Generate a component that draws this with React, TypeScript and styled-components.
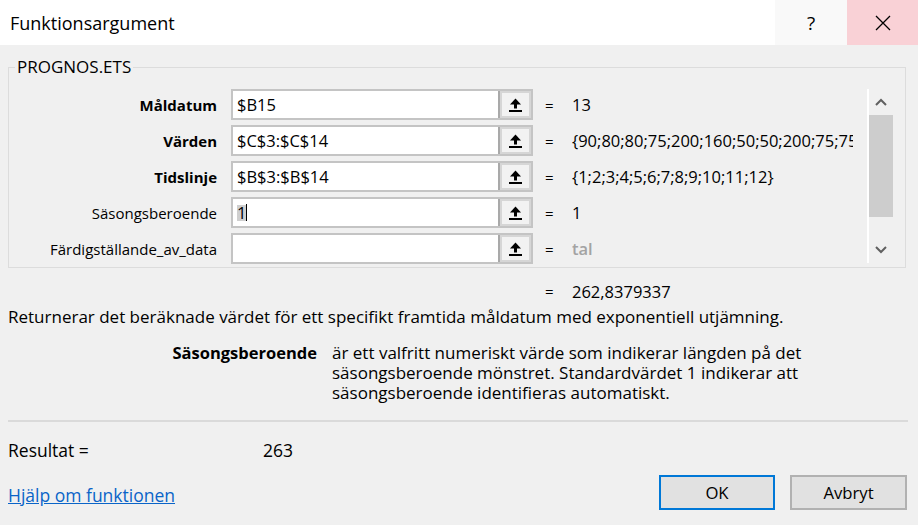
import React from "react";
import styled, { createGlobalStyle } from "styled-components";

const GlobalStyle = createGlobalStyle`
  html, body {
    margin: 0;
    padding: 0;
  }
  body {
    background: #f0f0f0;
    font-family: "Open Sans", "Noto Sans", sans-serif;
    font-size: 15px;
    color: #000;
  }
`;

const Dialog = styled.div`
  width: 918px;
  height: 525px;
  display: flex;
  flex-direction: column;
  background: #f0f0f0;
  overflow: hidden;
`;

const TitleBar = styled.header`
  height: 45px;
  flex: none;
  display: flex;
  align-items: stretch;
  background: #fff;
`;

const Title = styled.div`
  flex: 1;
  display: flex;
  align-items: center;
  padding-left: 10px;
  font-size: 18px;
`;

const CaptionButton = styled.div<{ $variant: "help" | "close" }>`
  width: ${(p) => (p.$variant === "close" ? 71 : 72)}px;
  display: flex;
  align-items: center;
  justify-content: center;
  background: ${(p) => (p.$variant === "close" ? "#f9d1d6" : "#f9f9f9")};
  font-size: 19px;
`;

const Group = styled.fieldset`
  margin: 14px 0 0 8px;
  width: 898px;
  box-sizing: border-box;
  border: 1px solid #dcdcdc;
  padding: 14px 0 3px 0;
  min-width: 0;
`;

const Legend = styled.legend`
  margin-left: 6px;
  padding: 0 2px;
  line-height: 16px;
  font-size: 17px;
`;

const GroupBody = styled.div`
  display: flex;
  align-items: flex-start;
`;

const ArgList = styled.div`
  display: flex;
  flex-direction: column;
  gap: 5px;
`;

const Columns = styled.div`
  display: grid;
  grid-template-columns: 222px 302px 39px 281px;
  align-items: center;
`;

const ArgRow = styled(Columns)`
  height: 31px;
`;

const ArgLabel = styled.label<{ $required?: boolean }>`
  text-align: right;
  padding-right: 14px;
  font-weight: ${(p) => (p.$required ? 700 : 400)};
  white-space: nowrap;
`;

const InputBox = styled.div`
  display: flex;
  height: 31px;
  box-sizing: border-box;
  border: 2px solid #c4c4c4;
  background: #fff;
`;

const Field = styled.div`
  flex: 1;
  display: flex;
  align-items: center;
  padding-left: 4px;
  white-space: nowrap;
  overflow: hidden;
  font-size: 16.5px;
`;

const Selection = styled.span`
  background: #cfcfcf;
  line-height: 16px;
`;

const Caret = styled.span`
  width: 1px;
  height: 17px;
  background: #000;
`;

const RefButton = styled.div`
  width: 33px;
  box-sizing: border-box;
  display: flex;
  align-items: center;
  justify-content: center;
  background: #f2f2f2;
  border-left: 2px solid #a9a9a9;
  box-shadow: inset 0 0 0 2px #d6d6d6;
`;

const Equals = styled.span<{ $col?: number }>`
  padding-left: 12px;
  grid-column: ${(p) => p.$col ?? "auto"};
`;

const Value = styled.span<{ $hint?: boolean }>`
  overflow: hidden;
  white-space: nowrap;
  font-size: 16.5px;
  line-height: 23px;
  color: ${(p) => (p.$hint ? "#a3a3a3" : "#000")};
  font-weight: ${(p) => (p.$hint ? 600 : 400)};
`;

const Scrollbar = styled.div`
  margin-left: 14px;
  width: 26px;
  height: 174px;
  box-sizing: border-box;
  border-left: 2px solid #fff;
  display: flex;
  flex-direction: column;
  align-items: stretch;
`;

const ScrollArrow = styled.div`
  height: 26px;
  display: flex;
  align-items: center;
  justify-content: center;
`;

const ScrollTrack = styled.div`
  flex: 1;
  display: flex;
  flex-direction: column;
`;

const Thumb = styled.div`
  height: 102px;
  background: #cdcdcd;
`;

const ResultRow = styled(Columns)`
  margin: 12px 0 0 9px;
  height: 22px;
`;

const Description = styled.p`
  margin: 5px 0 0 8px;
  line-height: 20px;
  font-size: 17px;
`;

const ArgHelp = styled.div`
  margin-top: 16px;
  display: grid;
  grid-template-columns: 317px 1fr;
  column-gap: 15px;
  line-height: 20px;
`;

const ArgHelpName = styled.span`
  text-align: right;
  font-weight: 700;
  font-size: 16.5px;
`;

const ArgHelpText = styled.span`
  display: flex;
  flex-direction: column;
  font-size: 17px;
`;

const Separator = styled.hr`
  margin: 17px 10px 0 8px;
  height: 2px;
  border: none;
  background: #dadada;
`;

const Outcome = styled.div`
  margin: 18px 0 0 8px;
  display: grid;
  grid-template-columns: 255px auto;
  line-height: 20px;
  font-size: 17.5px;
`;

const Footer = styled.div`
  margin-top: 15px;
  display: flex;
  align-items: center;
  padding: 0 11px 0 8px;
`;

const HelpLink = styled.a`
  flex: 1;
  margin-top: 5px;
  font-size: 17.5px;
  color: #0a64c8;
  text-decoration: underline;
  cursor: pointer;
`;

const ActionButton = styled.button<{ $default?: boolean }>`
  width: ${(p) => (p.$default ? 116 : 117)}px;
  height: 35px;
  margin-left: ${(p) => (p.$default ? 0 : 15)}px;
  box-sizing: border-box;
  border: 2px solid ${(p) => (p.$default ? "#0078d7" : "#b1b1b1")};
  background: #e1e1e1;
  font-family: inherit;
  font-size: 16.7px;
  color: #000;
  padding: 0;
`;

const UploadIcon = () => (
  <svg width="13" height="14" viewBox="0 0 13 14" aria-hidden="true">
    <polygon points="6.5,0.5 12,6.5 1,6.5" fill="#000" />
    <rect x="5" y="5.5" width="3" height="5" fill="#000" />
    <rect x="0" y="12" width="13" height="2" fill="#000" />
  </svg>
);

const Chevron = ({ up }: { up?: boolean }) => (
  <svg width="12" height="8" viewBox="0 0 12 8" aria-hidden="true">
    <polyline
      points={up ? "1,7 6,2 11,7" : "1,1 6,6 11,1"}
      fill="none"
      stroke="#606060"
      strokeWidth="2"
    />
  </svg>
);

const CloseGlyph = () => (
  <svg width="16" height="16" viewBox="0 0 16 16" aria-hidden="true">
    <path d="M1 1 L15 15 M15 1 L1 15" stroke="#000" strokeWidth="1.3" />
  </svg>
);

type Arg = {
  name: string;
  required: boolean;
  input: React.ReactNode;
  value: string;
  hint?: boolean;
};

const args: Arg[] = [
  { name: "Måldatum", required: true, input: "$B15", value: "13" },
  { name: "Värden", required: true, input: "$C$3:$C$14", value: "{90;80;80;75;200;160;50;50;200;75;75;50}" },
  { name: "Tidslinje", required: true, input: "$B$3:$B$14", value: "{1;2;3;4;5;6;7;8;9;10;11;12}" },
  {
    name: "Säsongsberoende",
    required: false,
    input: (
      <>
        <Selection>1</Selection>
        <Caret />
      </>
    ),
    value: "1",
  },
  { name: "Färdigställande_av_data", required: false, input: "", value: "tal", hint: true },
];

export default function App() {
  return (
    <>
      <GlobalStyle />
      <Dialog>
        <TitleBar>
          <Title>Funktionsargument</Title>
          <CaptionButton $variant="help">?</CaptionButton>
          <CaptionButton $variant="close">
            <CloseGlyph />
          </CaptionButton>
        </TitleBar>

        <Group>
          <Legend>PROGNOS.ETS</Legend>
          <GroupBody>
            <ArgList>
              {args.map((a) => (
                <ArgRow key={a.name}>
                  <ArgLabel $required={a.required}>{a.name}</ArgLabel>
                  <InputBox>
                    <Field>{a.input}</Field>
                    <RefButton>
                      <UploadIcon />
                    </RefButton>
                  </InputBox>
                  <Equals>=</Equals>
                  <Value $hint={a.hint}>{a.value}</Value>
                </ArgRow>
              ))}
            </ArgList>
            <Scrollbar>
              <ScrollArrow>
                <Chevron up />
              </ScrollArrow>
              <ScrollTrack>
                <Thumb />
              </ScrollTrack>
              <ScrollArrow>
                <Chevron />
              </ScrollArrow>
            </Scrollbar>
          </GroupBody>
        </Group>

        <ResultRow>
          <Equals $col={3}>=</Equals>
          <Value>262,8379337</Value>
        </ResultRow>

        <Description>
          Returnerar det beräknade värdet för ett specifikt framtida måldatum med exponentiell utjämning.
        </Description>

        <ArgHelp>
          <ArgHelpName>Säsongsberoende</ArgHelpName>
          <ArgHelpText>
            <span>är ett valfritt numeriskt värde som indikerar längden på det</span>
            <span>säsongsberoende mönstret. Standardvärdet 1 indikerar att</span>
            <span>säsongsberoende identifieras automatiskt.</span>
          </ArgHelpText>
        </ArgHelp>

        <Separator />

        <Outcome>
          <span>Resultat =</span>
          <span>263</span>
        </Outcome>

        <Footer>
          <HelpLink>Hjälp om funktionen</HelpLink>
          <ActionButton $default>OK</ActionButton>
          <ActionButton>Avbryt</ActionButton>
        </Footer>
      </Dialog>
    </>
  );
}
